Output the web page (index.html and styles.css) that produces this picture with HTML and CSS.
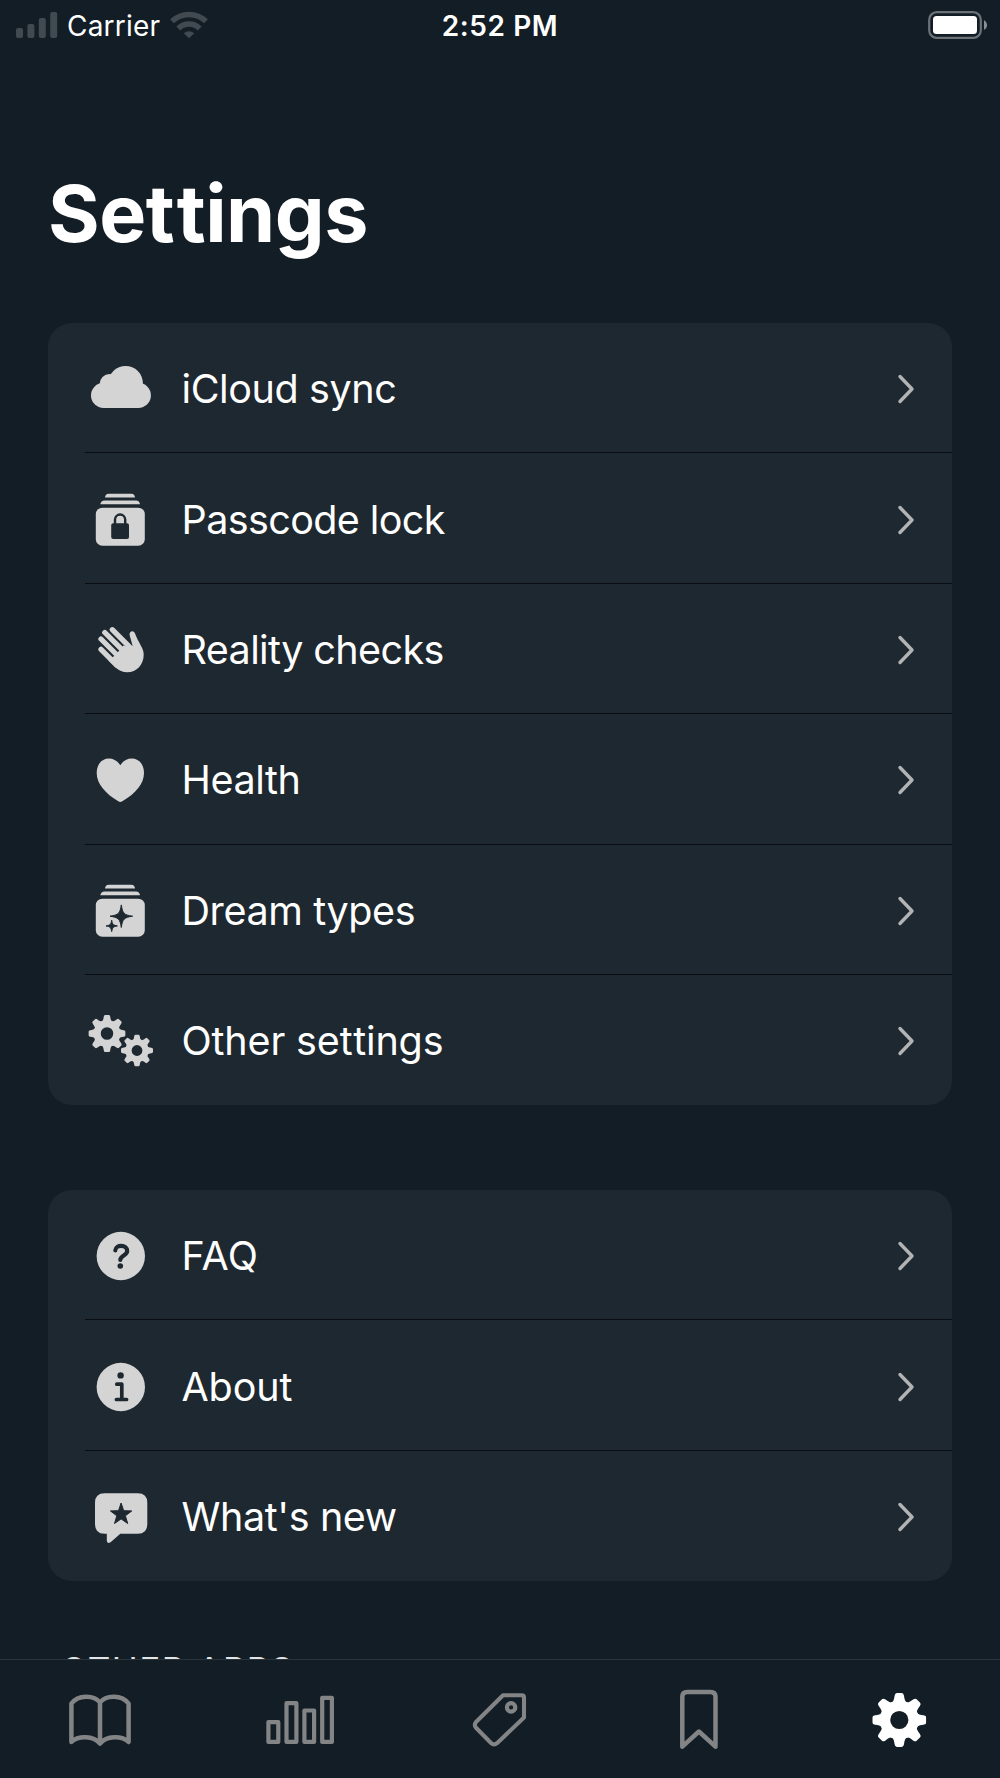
FILE: index.html
```html
<!DOCTYPE html>
<html lang="en">
<head>
<meta charset="utf-8">
<title>Settings</title>
<link rel="stylesheet" href="styles.css">
</head>
<body>
<svg class="defs" width="0" height="0" aria-hidden="true">
  <symbol id="gear" viewBox="-27 -27 54 54">
    <circle r="14.3" fill="none" stroke="currentColor" stroke-width="10.4"/>
    <g id="teeth2"><path id="tooth" d="M-7.5-17C-5.5-19-5.2-21-4.7-24.2Q-4.2-27-2.5-27H2.5Q4.2-27 4.7-24.2C5.2-21 5.5-19 7.5-17Z"/>
    <use href="#tooth" transform="rotate(45)"/></g>
    <use href="#teeth2" transform="rotate(90)"/>
    <use href="#teeth2" transform="rotate(180)"/>
    <use href="#teeth2" transform="rotate(270)"/>
  </symbol>
  <symbol id="chevron" viewBox="0 0 18 30"><path d="M3 2.5L15 15L3 27.5" fill="none" stroke="#b1b3b5" stroke-width="3.4" stroke-linecap="round" stroke-linejoin="round"/></symbol>
  <symbol id="stack" viewBox="0 0 70 70">
    <path d="M20 13.4Q20.5 9.8 23.5 9.8H46.5Q49.5 9.8 50 13.4ZM15.3 20.3Q16 16.4 19.5 16.4H51Q54.5 16.4 55 20.3Z"/>
    <rect x="10.8" y="23.7" width="49" height="38" rx="6.5"/>
  </symbol>
</svg>

<header class="status">
  <div class="status-left">
    <svg width="42" height="28" viewBox="0 0 42 28"><rect y="17" width="7" height="10" rx="2"/><rect x="11.4" y="13" width="7" height="14" rx="2"/><rect x="22.8" y="7" width="7" height="20" rx="2"/><rect x="34.2" y="1" width="7" height="26" rx="2"/></svg>
    <span class="carrier">Carrier</span>
    <svg width="38" height="28" viewBox="0 0 38 28"><g fill="none" stroke="currentColor" stroke-width="5.6"><path d="M2 10.3A24.5 24.5 0 0 1 36 10.3"/><path d="M8.3 17.4A15.3 15.3 0 0 1 29.7 17.4"/></g><path d="M19 27.3L13.8 22.2Q19 18.4 24.2 22.2Z"/></svg>
  </div>
  <span class="time">2:52 PM</span>
  <div class="status-right">
    <svg width="60" height="30" viewBox="0 0 60 30"><rect x="1.2" y="2.2" width="51.6" height="25.6" rx="7.5" fill="none" stroke="#6b7278" stroke-width="2.2"/><rect x="5" y="6" width="44" height="18" rx="3.5" fill="#fff"/><path d="M56 10Q59.2 12 59.2 15T56 20Z" fill="#8a8f93"/></svg>
  </div>
</header>

<main class="content">
  <h1>Se<span class="wide">t</span>tings</h1>

  <section class="card">
    <a class="row">
      <svg class="icon" viewBox="0 0 70 70"><circle cx="40.6" cy="30.3" r="17.3"/><circle cx="24.6" cy="31" r="10"/><circle cx="18.6" cy="42.4" r="12.6"/><circle cx="53.3" cy="42.4" r="12.6"/><path d="M18.6 36H53.3V55H18.6Z"/></svg>
      <span class="label snug">iCloud sync</span><svg class="chevron"><use href="#chevron"/></svg>
    </a>
    <a class="row">
      <svg class="icon" viewBox="0 0 70 70"><use href="#stack"/><rect class="cut" x="26.2" y="39.3" width="17.8" height="15.8" rx="2"/><path class="cut-line" d="M30 41V35.6A5.1 5.1 0 0 1 40.2 35.6V41" stroke-width="2.4"/></svg>
      <span class="label tight">Passcode lock</span><svg class="chevron"><use href="#chevron"/></svg>
    </a>
    <a class="row">
      <svg class="icon" viewBox="0 0 70 70"><path d="M16 35.3L32 51.3M16 25L36 45M19.8 18.5L41 39.7M27.3 15.7L48 36.4" fill="none" stroke="currentColor" stroke-width="5.3" stroke-linecap="round"/><path d="M23 46L25.7 48.8C30 53 34 58.3 42 58.3C52 58.3 58.7 50.5 58.7 40.5C58.7 34 53.5 29 50 19.5C48.5 15.7 44 17.3 44.6 21L47.6 32L43 33L38.4 31.4L33 38L28.6 42.6Z"/></svg>
      <span class="label tight">Reality checks</span><svg class="chevron"><use href="#chevron"/></svg>
    </a>
    <a class="row">
      <svg class="icon" viewBox="0 0 70 70"><path d="M35.3 21.3C32.5 17 28.5 14.6 24 14.6C17 14.6 11.7 20 11.7 29C11.7 40 20.5 49.5 33.3 57.3Q35.3 58.7 37.3 57.3C50.5 49.5 59 40 59 29C59 20 53.7 14.6 46.7 14.6C42 14.6 38 17 35.3 21.3Z"/></svg>
      <span class="label snug">Health</span><svg class="chevron"><use href="#chevron"/></svg>
    </a>
    <a class="row">
      <svg class="icon" viewBox="0 0 70 70"><use href="#stack"/><path class="cut" d="M36.3 29.9C37.6 38.5 39 39.9 47.6 41.2C39 42.5 37.6 43.9 36.3 52.5C35 43.9 33.6 42.5 25 41.2C33.6 39.9 35 38.5 36.3 29.9ZM26.7 45.2C27.4 49.4 28.2 50.2 32.4 50.9C28.2 51.6 27.4 52.4 26.7 56.6C26 52.4 25.2 51.6 21 50.9C25.2 50.2 26 49.4 26.7 45.2Z" stroke="#1e2830" stroke-linejoin="round"/></svg>
      <span class="label snug">Dream types</span><svg class="chevron"><use href="#chevron"/></svg>
    </a>
    <a class="row">
      <svg class="icon" viewBox="0 0 70 70"><use href="#gear" x="3.4" y="9.9" width="37.2" height="37.2"/><use href="#gear" x="36" y="29.5" width="32" height="32"/></svg>
      <span class="label">Other se<span class="wide">t</span>tings</span><svg class="chevron"><use href="#chevron"/></svg>
    </a>
  </section>

  <section class="card">
    <a class="row">
      <svg class="icon" viewBox="0 0 70 70"><circle cx="35.8" cy="36" r="24.2"/><path class="cut-line" d="M30.3 30.3C30.6 24.3 42.2 24.3 42.2 31C42.2 35.6 35.3 35.4 35.3 40" stroke-width="4.2"/><circle class="cut" cx="35.3" cy="46" r="2.8"/></svg>
      <span class="label loose">FAQ</span><svg class="chevron"><use href="#chevron"/></svg>
    </a>
    <a class="row">
      <svg class="icon" viewBox="0 0 70 70"><circle cx="35.8" cy="36" r="24.2"/><circle class="cut" cx="35.6" cy="24.4" r="3.2"/><path class="cut-line" d="M31.8 33.2H36.8V48.5M31.4 48.5H41.6" stroke-width="3.7"/></svg>
      <span class="label">About</span><svg class="chevron"><use href="#chevron"/></svg>
    </a>
    <a class="row">
      <svg class="icon" viewBox="0 0 70 70"><path d="M19.5 12.3H52.8Q62.3 12.3 62.3 21.8V43.2Q62.3 52.7 52.8 52.7H35.3L25.6 61.2Q22 63.4 21.8 59.6V52.7H19.5Q10 52.7 10 43.2V21.8Q10 12.3 19.5 12.3Z"/><path class="cut" d="M36.1 22L38.7 29.7L46.8 29.9L40.4 34.8L42.7 42.5L36.1 37.9L29.5 42.5L31.8 34.8L25.4 29.9L33.5 29.7Z" stroke="#1e2830" stroke-linejoin="round"/></svg>
      <span class="label snug">What's new</span><svg class="chevron"><use href="#chevron"/></svg>
    </a>
  </section>

  <h2>OTHER APPS</h2>
</main>

<nav class="tabs">
  <a class="tab"><svg viewBox="0 0 80 80"><path d="M40 22.5C34 14.6 18 14.6 11.4 23.5V62C18 55.4 33.5 55.4 40 63.5C46.5 55.4 62 55.4 68.6 62V23.5C62 14.6 46 14.6 40 22.5ZM40 22.5V63" stroke-width="4.5"/></svg></a>
  <a class="tab"><svg viewBox="0 0 80 80"><path d="M8.4 42.1H18.3V61.9H8.4ZM26.5 23.2H36.4V61.9H26.5ZM44.4 30.5H54.1V61.9H44.4ZM62.2 17.8H71.9V61.9H62.2Z" stroke-width="4.2"/></svg></a>
  <a class="tab"><svg viewBox="0 0 80 80"><path d="M43 15.3H61.8Q64 15.3 64 17.5V37.5L37 63.2Q33.9 65.6 31 63L16 47.8Q13.7 45 16 42Z" stroke-width="4.1"/><circle cx="51.1" cy="27.4" r="4.2" stroke-width="4.2"/></svg></a>
  <a class="tab"><svg viewBox="0 0 80 80"><path d="M22.3 66.7V17Q22.3 12 27.3 12H50.5Q55.5 12 55.5 17V66.7L38.9 51.5Z" stroke-width="4.5"/></svg></a>
  <a class="tab active"><svg viewBox="0 0 80 80"><use href="#gear" x="12.3" y="13" width="54" height="54"/></svg></a>
</nav>
</body>
</html>
```
FILE: styles.css
```css
* { box-sizing: border-box; }

body {
  margin: 0;
  width: 1000px;
  height: 1778px;
  display: flex;
  flex-direction: column;
  overflow: hidden;
  background: #131d25;
  color: #fff;
  font-family: Inter, "Liberation Sans", sans-serif;
  font-feature-settings: "calt" 0, "liga" 0;
}

.defs { display: block; flex: none; height: 0; }

.status {
  flex: none;
  height: 52px;
  padding: 0 12px 0 16px;
  display: grid;
  grid-template-columns: 1fr auto 1fr;
  align-items: center;
}
.status-left { display: flex; align-items: center; color: #424a51; fill: currentColor; }
.status-left svg { flex: none; margin-bottom: 2px; }
.status-right { display: flex; justify-content: flex-end; }
.status-right svg { margin-bottom: 3px; }
.carrier { width: 93px; margin: 0 10px 0 9px; font-size: 28px; line-height: 50px; color: #fff; letter-spacing: 0.2px; white-space: nowrap; }
.time { margin-right: 4px; font-size: 28px; line-height: 50px; font-weight: 600; letter-spacing: 0.6px; }

.content {
  flex: 1;
  min-height: 0;
  overflow: hidden;
  padding: 0 48px;
}

h1 { margin: 111px 0 60px; font-size: 79px; line-height: 100px; font-weight: 700; letter-spacing: -0.5px; }
h1 .wide { letter-spacing: 2px; }

.card {
  margin-bottom: 84.6px;
  border-radius: 24px;
  background: #1e2830;
}

.row {
  position: relative;
  height: 130.4px;
  padding: 0 37px;
  display: flex;
  align-items: center;
}
.row:not(:last-child)::after {
  content: "";
  position: absolute;
  left: 37px;
  right: 0;
  bottom: 0;
  height: 1px;
  background: #090d11;
}

.icon { flex: none; width: 70px; height: 70px; color: #d4d4d4; fill: currentColor; }
.icon .cut { fill: #1e2830; }
.icon .cut-line { fill: none; stroke: #1e2830; stroke-linecap: round; stroke-linejoin: round; }
.label { flex: 1; margin-left: 26.5px; padding-top: 2px; font-size: 39.5px; line-height: 50px; letter-spacing: -0.15px; }
.label.snug { letter-spacing: -0.4px; }
.label.tight { letter-spacing: -0.6px; }
.label.loose { letter-spacing: 0.3px; }
.label .wide { letter-spacing: 0.6px; }
.chevron { flex: none; width: 18px; height: 30px; margin-top: 2px; }

.card + h2 { margin: -17px 0 0 12.5px; font-size: 35px; line-height: 42px; font-weight: 400; letter-spacing: 1.5px; color: #e2e4e5; }

.tabs {
  flex: none;
  height: 119px;
  border-top: 1px solid #2b343b;
  display: grid;
  grid-template-columns: repeat(5, 1fr);
  justify-items: center;
  padding-top: 20px;
  color: #838485;
}
.tab svg { display: block; width: 80px; height: 80px; fill: none; stroke: currentColor; stroke-linecap: round; stroke-linejoin: round; }
.tab.active { color: #fff; }
.tab.active svg { fill: currentColor; stroke: none; }
```
